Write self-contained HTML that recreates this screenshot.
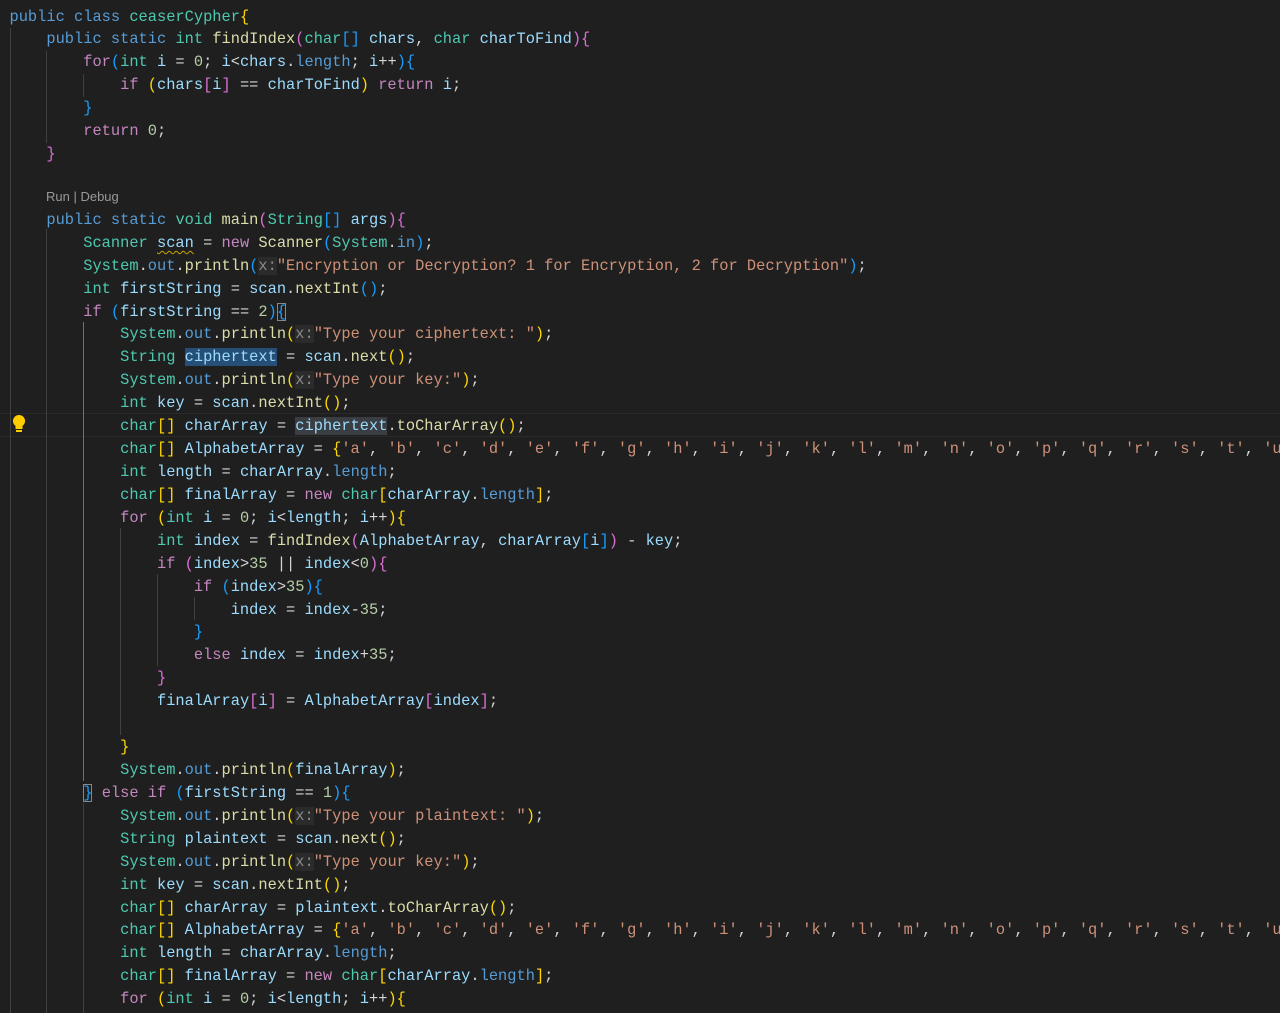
<!DOCTYPE html>
<html><head><meta charset="utf-8"><style>
html,body{margin:0;padding:0;background:#1f1f1f;width:1280px;height:1013px;overflow:hidden}
#ed{position:relative;width:1280px;height:1013px;font-family:"Liberation Mono","DejaVu Sans Mono",monospace;font-size:15.36px;color:#d4d4d4}
#code{position:absolute;left:9.5px;top:5.5px;width:1300px}
.l{height:22.93px;line-height:22.93px;white-space:pre}
.sp{height:20px}
.g{position:absolute;width:1px;background:#404040}
.k{color:#569cd6}.t{color:#4ec9b0}.c{color:#c586c0}.v{color:#9cdcfe}.f{color:#dcdcaa}.s{color:#ce9178}.n{color:#b5cea8}
.y{color:#ffd700}.p{color:#da70d6}.b{color:#179fff}
.h{color:#8b8b8b;background:#2b2b2b}
.sel{background:#264f78}.sel2{background:#3a3d41}
.box{outline:1px solid #888;outline-offset:-1px}
.lens{position:absolute;left:46px;top:189px;font-family:"Liberation Sans",sans-serif;font-size:13px;color:#999}
.cur{position:absolute;left:0;width:1280px;border-top:1px solid #2a2a2a;border-bottom:1px solid #2a2a2a}
.sq{text-decoration:underline wavy #c9a400;text-underline-offset:3px;text-decoration-thickness:1px}
</style></head><body><div id="ed">
<div class="cur" style="top:413px;height:22px"></div>
<div class="g" style="left:10px;top:28px;height:985px"></div>
<div class="g" style="left:46px;top:51px;height:92px"></div>
<div class="g" style="left:46px;top:229px;height:784px"></div>
<div class="g" style="left:83px;top:74px;height:23px"></div>
<div class="g" style="left:83px;top:322px;height:459px;background:#707070"></div>
<div class="g" style="left:83px;top:803px;height:210px"></div>
<div class="g" style="left:120px;top:528px;height:207px"></div>
<div class="g" style="left:157px;top:574px;height:92px"></div>
<div class="g" style="left:194px;top:597px;height:23px"></div>
<svg style="position:absolute;left:12px;top:414px" width="14" height="20" viewBox="0 0 14 20"><path d="M7 1a6 6 0 0 0-3.5 10.9V15h7v-3.1A6 6 0 0 0 7 1z" fill="#ffcc00"/><rect x="4" y="16" width="6" height="2" fill="#ffcc00"/></svg>
<div class="lens">Run | Debug</div>
<div id="code">
<div class="l"><span class="k">public</span> <span class="k">class</span> <span class="t">ceaserCypher</span><span class="y">{</span></div>
<div class="l">    <span class="k">public</span> <span class="k">static</span> <span class="t">int</span> <span class="f">findIndex</span><span class="p">(</span><span class="t">char</span><span class="b">[]</span> <span class="v">chars</span>, <span class="t">char</span> <span class="v">charToFind</span><span class="p">){</span></div>
<div class="l">        <span class="c">for</span><span class="b">(</span><span class="t">int</span> <span class="v">i</span> = <span class="n">0</span>; <span class="v">i</span>&lt;<span class="v">chars</span>.<span class="k">length</span>; <span class="v">i</span>++<span class="b">){</span></div>
<div class="l">            <span class="c">if</span> <span class="y">(</span><span class="v">chars</span><span class="p">[</span><span class="v">i</span><span class="p">]</span> == <span class="v">charToFind</span><span class="y">)</span> <span class="c">return</span> <span class="v">i</span>;</div>
<div class="l">        <span class="b">}</span></div>
<div class="l">        <span class="c">return</span> <span class="n">0</span>;</div>
<div class="l">    <span class="p">}</span></div>
<div class="l"> </div>
<div class="sp"></div>
<div class="l">    <span class="k">public</span> <span class="k">static</span> <span class="t">void</span> <span class="f">main</span><span class="p">(</span><span class="t">String</span><span class="b">[]</span> <span class="v">args</span><span class="p">){</span></div>
<div class="l">        <span class="t">Scanner</span> <span class="v sq">scan</span> = <span class="c">new</span> <span class="f">Scanner</span><span class="b">(</span><span class="t">System</span>.<span class="k">in</span><span class="b">)</span>;</div>
<div class="l">        <span class="t">System</span>.<span class="k">out</span>.<span class="f">println</span><span class="b">(</span><span class="h">x:</span><span class="s">"Encryption or Decryption? 1 for Encryption, 2 for Decryption"</span><span class="b">)</span>;</div>
<div class="l">        <span class="t">int</span> <span class="v">firstString</span> = <span class="v">scan</span>.<span class="f">nextInt</span><span class="b">()</span>;</div>
<div class="l">        <span class="c">if</span> <span class="b">(</span><span class="v">firstString</span> == <span class="n">2</span><span class="b">)</span><span class="b box">{</span></div>
<div class="l">            <span class="t">System</span>.<span class="k">out</span>.<span class="f">println</span><span class="y">(</span><span class="h">x:</span><span class="s">"Type your ciphertext: "</span><span class="y">)</span>;</div>
<div class="l">            <span class="t">String</span> <span class="v sel">ciphertext</span> = <span class="v">scan</span>.<span class="f">next</span><span class="y">()</span>;</div>
<div class="l">            <span class="t">System</span>.<span class="k">out</span>.<span class="f">println</span><span class="y">(</span><span class="h">x:</span><span class="s">"Type your key:"</span><span class="y">)</span>;</div>
<div class="l">            <span class="t">int</span> <span class="v">key</span> = <span class="v">scan</span>.<span class="f">nextInt</span><span class="y">()</span>;</div>
<div class="l">            <span class="t">char</span><span class="y">[]</span> <span class="v">charArray</span> = <span class="v sel2">ciphertext</span>.<span class="f">toCharArray</span><span class="y">()</span>;</div>
<div class="l">            <span class="t">char</span><span class="y">[]</span> <span class="v">AlphabetArray</span> = <span class="y">{</span><span class="s">'a'</span>, <span class="s">'b'</span>, <span class="s">'c'</span>, <span class="s">'d'</span>, <span class="s">'e'</span>, <span class="s">'f'</span>, <span class="s">'g'</span>, <span class="s">'h'</span>, <span class="s">'i'</span>, <span class="s">'j'</span>, <span class="s">'k'</span>, <span class="s">'l'</span>, <span class="s">'m'</span>, <span class="s">'n'</span>, <span class="s">'o'</span>, <span class="s">'p'</span>, <span class="s">'q'</span>, <span class="s">'r'</span>, <span class="s">'s'</span>, <span class="s">'t'</span>, <span class="s">'u'</span>, <span class="s">'v'</span></div>
<div class="l">            <span class="t">int</span> <span class="v">length</span> = <span class="v">charArray</span>.<span class="k">length</span>;</div>
<div class="l">            <span class="t">char</span><span class="y">[]</span> <span class="v">finalArray</span> = <span class="c">new</span> <span class="t">char</span><span class="y">[</span><span class="v">charArray</span>.<span class="k">length</span><span class="y">]</span>;</div>
<div class="l">            <span class="c">for</span> <span class="y">(</span><span class="t">int</span> <span class="v">i</span> = <span class="n">0</span>; <span class="v">i</span>&lt;<span class="v">length</span>; <span class="v">i</span>++<span class="y">){</span></div>
<div class="l">                <span class="t">int</span> <span class="v">index</span> = <span class="f">findIndex</span><span class="p">(</span><span class="v">AlphabetArray</span>, <span class="v">charArray</span><span class="b">[</span><span class="v">i</span><span class="b">]</span><span class="p">)</span> - <span class="v">key</span>;</div>
<div class="l">                <span class="c">if</span> <span class="p">(</span><span class="v">index</span>&gt;<span class="n">35</span> || <span class="v">index</span>&lt;<span class="n">0</span><span class="p">){</span></div>
<div class="l">                    <span class="c">if</span> <span class="b">(</span><span class="v">index</span>&gt;<span class="n">35</span><span class="b">){</span></div>
<div class="l">                        <span class="v">index</span> = <span class="v">index</span>-<span class="n">35</span>;</div>
<div class="l">                    <span class="b">}</span></div>
<div class="l">                    <span class="c">else</span> <span class="v">index</span> = <span class="v">index</span>+<span class="n">35</span>;</div>
<div class="l">                <span class="p">}</span></div>
<div class="l">                <span class="v">finalArray</span><span class="p">[</span><span class="v">i</span><span class="p">]</span> = <span class="v">AlphabetArray</span><span class="p">[</span><span class="v">index</span><span class="p">]</span>;</div>
<div class="l"> </div>
<div class="l">            <span class="y">}</span></div>
<div class="l">            <span class="t">System</span>.<span class="k">out</span>.<span class="f">println</span><span class="y">(</span><span class="v">finalArray</span><span class="y">)</span>;</div>
<div class="l">        <span class="b box">}</span> <span class="c">else</span> <span class="c">if</span> <span class="b">(</span><span class="v">firstString</span> == <span class="n">1</span><span class="b">){</span></div>
<div class="l">            <span class="t">System</span>.<span class="k">out</span>.<span class="f">println</span><span class="y">(</span><span class="h">x:</span><span class="s">"Type your plaintext: "</span><span class="y">)</span>;</div>
<div class="l">            <span class="t">String</span> <span class="v">plaintext</span> = <span class="v">scan</span>.<span class="f">next</span><span class="y">()</span>;</div>
<div class="l">            <span class="t">System</span>.<span class="k">out</span>.<span class="f">println</span><span class="y">(</span><span class="h">x:</span><span class="s">"Type your key:"</span><span class="y">)</span>;</div>
<div class="l">            <span class="t">int</span> <span class="v">key</span> = <span class="v">scan</span>.<span class="f">nextInt</span><span class="y">()</span>;</div>
<div class="l">            <span class="t">char</span><span class="y">[]</span> <span class="v">charArray</span> = <span class="v">plaintext</span>.<span class="f">toCharArray</span><span class="y">()</span>;</div>
<div class="l">            <span class="t">char</span><span class="y">[]</span> <span class="v">AlphabetArray</span> = <span class="y">{</span><span class="s">'a'</span>, <span class="s">'b'</span>, <span class="s">'c'</span>, <span class="s">'d'</span>, <span class="s">'e'</span>, <span class="s">'f'</span>, <span class="s">'g'</span>, <span class="s">'h'</span>, <span class="s">'i'</span>, <span class="s">'j'</span>, <span class="s">'k'</span>, <span class="s">'l'</span>, <span class="s">'m'</span>, <span class="s">'n'</span>, <span class="s">'o'</span>, <span class="s">'p'</span>, <span class="s">'q'</span>, <span class="s">'r'</span>, <span class="s">'s'</span>, <span class="s">'t'</span>, <span class="s">'u'</span>, <span class="s">'v'</span></div>
<div class="l">            <span class="t">int</span> <span class="v">length</span> = <span class="v">charArray</span>.<span class="k">length</span>;</div>
<div class="l">            <span class="t">char</span><span class="y">[]</span> <span class="v">finalArray</span> = <span class="c">new</span> <span class="t">char</span><span class="y">[</span><span class="v">charArray</span>.<span class="k">length</span><span class="y">]</span>;</div>
<div class="l">            <span class="c">for</span> <span class="y">(</span><span class="t">int</span> <span class="v">i</span> = <span class="n">0</span>; <span class="v">i</span>&lt;<span class="v">length</span>; <span class="v">i</span>++<span class="y">){</span></div>
</div>
</div></body></html>
